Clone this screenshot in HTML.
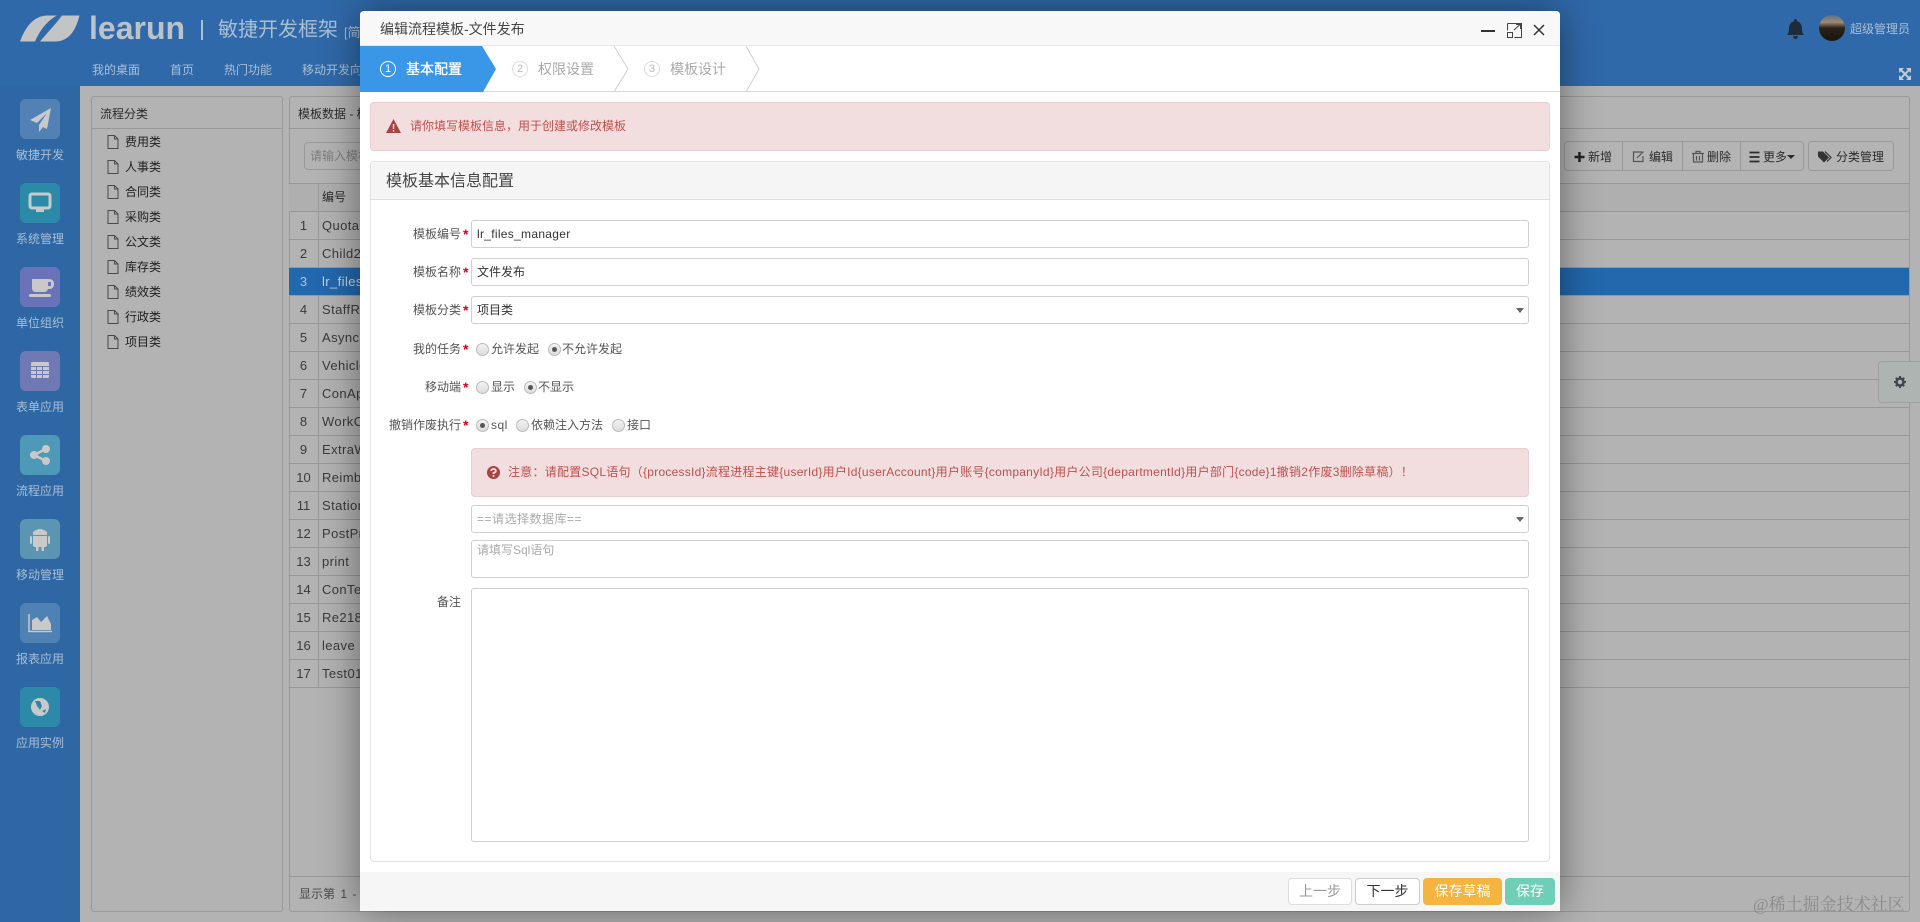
<!DOCTYPE html>
<html lang="zh-CN"><head><meta charset="utf-8"><title>learun</title>
<style>
*{box-sizing:border-box}
html,body{margin:0;padding:0;width:1920px;height:922px;overflow:hidden;background:#b3b3b3;font:12px/16px "Liberation Sans","Noto Sans CJK SC",sans-serif;color:#333}
#w{position:absolute;left:0;top:0;width:1920px;height:922px;overflow:hidden;filter:blur(.35px)}
.a,.t{position:absolute}
.t{white-space:nowrap}
.ic{position:absolute;left:20px;width:40px;height:40px;border-radius:6px}
.ic svg{position:absolute;left:0;top:0}
.sl{position:absolute;left:0;width:80px;text-align:center;color:#a9bfd4;line-height:16px}
.nav{position:absolute;top:62px;color:#a9bfd4;line-height:16px;white-space:nowrap}
.tree{position:absolute;left:125px;color:#1f1f1f;line-height:16px}
.f{position:absolute;left:107px}
.hl{position:absolute;left:289px;width:1620px;height:1px;background:#989898}
.n{position:absolute;left:289px;width:29px;text-align:center;color:#3a3a3a;font-size:13px;line-height:16px}
.c{position:absolute;left:322px;color:#3a3a3a;font-size:13px;line-height:16px;letter-spacing:.4px;white-space:nowrap}
.panel{position:absolute;border:1px solid #999;border-radius:3px;background:#b3b3b3}
.tb{position:absolute;top:141px;height:30px;border:1px solid #999;background:#b4b4b4}
.tt{position:absolute;top:149px;line-height:16px;color:#2b2b2b;white-space:nowrap}
.lab{position:absolute;right:1459px;color:#555;line-height:16px;white-space:nowrap}
.st{position:absolute;left:463px;color:#d8001c;line-height:16px;font-size:14px;font-weight:bold}
.inp{position:absolute;left:471px;width:1058px;height:28px;border:1px solid #d0d0d0;border-radius:3px;background:#fff;line-height:26px;padding-left:5px;color:#333;white-space:nowrap}
.arr{position:absolute;right:4px;top:11px;width:0;height:0;border:4px solid transparent;border-top:5px solid #666;border-bottom:0}
.r{position:absolute;width:13px;height:13px;border-radius:50%;border:1px solid #bbb;background:linear-gradient(#f2f2f2,#dcdcdc)}
.r.on:after{content:"";position:absolute;left:3px;top:3px;width:5px;height:5px;border-radius:50%;background:#555}
.rt{position:absolute;color:#555;line-height:16px;white-space:nowrap}
.btn{position:absolute;top:878px;height:27px;border-radius:4px;text-align:center;line-height:25px;font-size:14px;white-space:nowrap;border:1px solid #ddd;background:#fff}
</style></head><body><div id="w">

<!-- header + sidebar -->
<div class="a" style="left:0;top:0;width:1920px;height:86px;background:#3069a9"></div>
<div class="a" style="left:0;top:86px;width:80px;height:836px;background:#2e67a3"></div>

<svg class="a" style="left:0;top:0" width="90" height="50"><path fill="#c2c4c6" d="M20 41.500 C25 28 33 16 47 15.500 L57 15.500 C48 20 40 30 35 41.500 Z M40 41.500 C47 33 55 25 62 15.500 L79.500 15.500 C76 30 69 41.500 55 41.500 Z"/></svg>
<div class="t" style="left:89px;top:8px;font-size:32px;line-height:40px;font-weight:bold;color:#bcc2c9">learun</div>
<div class="a" style="left:201px;top:20px;width:2px;height:20px;background:#a9bfd4"></div>
<div class="t" style="left:218px;top:16px;font-size:20px;line-height:28px;color:#a9bfd4">敏捷开发框架</div>
<div class="t" style="left:344px;top:24px;font-size:13px;line-height:18px;color:#a9bfd4">[简</div>

<div class="nav" style="left:92px">我的桌面</div>
<div class="nav" style="left:170px">首页</div>
<div class="nav" style="left:224px">热门功能</div>
<div class="nav" style="left:302px">移动开发向</div>

<div class="ic" style="top:99px;background:#5181b5"><svg width="40" height="40"><path fill="#c9c9c9" d="M31 9 L10 21 L17 24 L27 14 L19 26 L19 33 L23 28 L27 30 Z"/></svg></div>
<div class="sl" style="top:147px">敏捷开发</div>
<div class="ic" style="top:183px;background:#2c8aa9"><svg width="40" height="40"><rect x="10" y="11" width="20" height="14" rx="2" fill="none" stroke="#c9c9c9" stroke-width="3"/><rect x="16" y="26" width="8" height="3" fill="#c9c9c9"/></svg></div>
<div class="sl" style="top:231px">系统管理</div>
<div class="ic" style="top:267px;background:#6a72ba"><svg width="40" height="40"><path fill="#c9c9c9" d="M12 12 H29 Q34 12 34 17 Q34 22 29 22 H28 Q27 25 24 25 H16 Q12 25 12 21 Z"/><rect x="9" y="27" width="22" height="3" rx="1.500" fill="#c9c9c9"/><rect x="28" y="15" width="3" height="4" fill="#6a72ba"/></svg></div>
<div class="sl" style="top:315px">单位组织</div>
<div class="ic" style="top:351px;background:#6f7ab4"><svg width="40" height="40"><rect x="11" y="11" width="18" height="16" rx="1.500" fill="#c9c9c9"/><path stroke="#6f7ab4" stroke-width="1" d="M11 15.500H29M11 19.500H29M11 23.500H29M16.500 15V27M22.500 15V27"/></svg></div>
<div class="sl" style="top:399px">表单应用</div>
<div class="ic" style="top:435px;background:#4e98b8"><svg width="40" height="40"><path stroke="#c9c9c9" stroke-width="2.500" d="M14 20L26 14M14 20L26 26"/><circle cx="14" cy="20" r="4" fill="#c9c9c9"/><circle cx="26" cy="14" r="4" fill="#c9c9c9"/><circle cx="26" cy="26" r="4" fill="#c9c9c9"/></svg></div>
<div class="sl" style="top:483px">流程应用</div>
<div class="ic" style="top:519px;background:#5c95b1"><svg width="40" height="40"><path fill="#c9c9c9" d="M13 13 Q20 7 27 13 V16 H13 Z M13 17 H27 V26 Q27 28 25 28 H15 Q13 28 13 26 Z"/><rect x="10" y="17" width="2" height="8" rx="1" fill="#c9c9c9"/><rect x="28" y="17" width="2" height="8" rx="1" fill="#c9c9c9"/><rect x="16" y="28" width="2.500" height="4" fill="#c9c9c9"/><rect x="21.500" y="28" width="2.500" height="4" fill="#c9c9c9"/></svg></div>
<div class="sl" style="top:567px">移动管理</div>
<div class="ic" style="top:603px;background:#5081b3"><svg width="40" height="40"><path fill="none" stroke="#c9c9c9" stroke-width="1.500" d="M9 11V28.500H32"/><path fill="#c9c9c9" d="M12 27V17L17 14L21 19L27 13L31 21V27Z"/></svg></div>
<div class="sl" style="top:651px">报表应用</div>
<div class="ic" style="top:687px;background:#2c8aa8"><svg width="40" height="40"><circle cx="20" cy="20" r="9" fill="#c9c9c9"/><path fill="#2c8aa8" d="M15 14 L20 14 L22 19 L20 23 L17 19 Z M22 24 L26 22 L25 26 Z"/></svg></div>
<div class="sl" style="top:735px">应用实例</div>

<div class="t" style="left:1787px;top:19px;width:17px;height:20px"><svg width="17" height="20"><path fill="#1e2b3d" d="M8.500 0 Q10 0 10 2 Q15 4 15 10 Q15 14 17 16 H0 Q2 14 2 10 Q2 4 7 2 Q7 0 8.500 0 Z M6 17 H11 Q10.500 20 8.500 20 Q6.500 20 6 17 Z"/></svg></div>
<div class="a" style="left:1819px;top:15px;width:26px;height:26px;border-radius:50%;background:linear-gradient(#5a7090 0%,#a08a70 28%,#2a2118 50%,#1b1510 100%)"></div>
<div class="t" style="left:1850px;top:21px;color:#a9bfd4">超级管理员</div>
<svg class="a" style="left:1899px;top:68px" width="12" height="12"><path fill="none" stroke="#c5ccd3" stroke-width="2" d="M1 1L11 11M11 1L1 11"/><path fill="#c5ccd3" d="M0 0H5L0 5ZM12 0V5L7 0ZM0 12V7L5 12ZM12 12H7L12 7Z"/></svg>

<!-- left panel -->
<div class="panel" style="left:91px;top:96px;width:192px;height:816px"></div>
<div class="a" style="left:91px;top:128px;width:192px;height:1px;background:#989898"></div>
<div class="t" style="left:100px;top:106px;color:#2b2b2b">流程分类</div>
<svg width="0" height="0" style="position:absolute"><defs><symbol id="fi" viewBox="0 0 12 14"><path fill="none" stroke="#4a4a4a" d="M1 .5H7.500L11 4V13.500H1ZM7.500 .5V4H11"/></symbol></defs></svg>
<svg class="f" style="top:135px" width="12" height="14"><use href="#fi"/></svg><div class="tree" style="top:134px">费用类</div>
<svg class="f" style="top:160px" width="12" height="14"><use href="#fi"/></svg><div class="tree" style="top:159px">人事类</div>
<svg class="f" style="top:185px" width="12" height="14"><use href="#fi"/></svg><div class="tree" style="top:184px">合同类</div>
<svg class="f" style="top:210px" width="12" height="14"><use href="#fi"/></svg><div class="tree" style="top:209px">采购类</div>
<svg class="f" style="top:235px" width="12" height="14"><use href="#fi"/></svg><div class="tree" style="top:234px">公文类</div>
<svg class="f" style="top:260px" width="12" height="14"><use href="#fi"/></svg><div class="tree" style="top:259px">库存类</div>
<svg class="f" style="top:285px" width="12" height="14"><use href="#fi"/></svg><div class="tree" style="top:284px">绩效类</div>
<svg class="f" style="top:310px" width="12" height="14"><use href="#fi"/></svg><div class="tree" style="top:309px">行政类</div>
<svg class="f" style="top:335px" width="12" height="14"><use href="#fi"/></svg><div class="tree" style="top:334px">项目类</div>

<!-- right panel -->
<div class="panel" style="left:289px;top:96px;width:1621px;height:816px"></div>
<div class="hl" style="top:128px"></div>
<div class="t" style="left:298px;top:106px;color:#2b2b2b">模板数据 - 模</div>
<div class="a" style="left:304px;top:142px;width:80px;height:28px;border:1px solid #999;border-radius:4px"></div>
<div class="t" style="left:310px;top:148px;color:#7d7d7d">请输入模板</div>

<div class="a" style="left:289px;top:183px;width:1620px;height:28px;background:#afafaf"></div>
<div class="a" style="left:318px;top:183px;width:1px;height:504px;background:#989898"></div>
<div class="hl" style="top:183px"></div>
<div class="hl" style="top:211px"></div><div class="hl" style="top:239px"></div><div class="hl" style="top:267px"></div><div class="hl" style="top:295px"></div><div class="hl" style="top:323px"></div><div class="hl" style="top:351px"></div><div class="hl" style="top:379px"></div><div class="hl" style="top:407px"></div><div class="hl" style="top:435px"></div><div class="hl" style="top:463px"></div><div class="hl" style="top:491px"></div><div class="hl" style="top:519px"></div><div class="hl" style="top:547px"></div><div class="hl" style="top:575px"></div><div class="hl" style="top:603px"></div><div class="hl" style="top:631px"></div><div class="hl" style="top:659px"></div><div class="hl" style="top:687px"></div>
<div class="hl" style="top:876px"></div>
<div class="a" style="left:289px;top:268px;width:1620px;height:27px;background:#2268ac"></div>

<div class="t" style="left:322px;top:189px;color:#2b2b2b">编号</div>
<div class="n" style="top:218px">1</div><div class="c" style="top:218px">Quota</div>
<div class="n" style="top:246px">2</div><div class="c" style="top:246px">Child2</div>
<div class="n" style="top:274px;color:#b3c4d6">3</div><div class="c" style="top:274px;color:#c7d3df">lr_files</div>
<div class="n" style="top:302px">4</div><div class="c" style="top:302px">StaffRe</div>
<div class="n" style="top:330px">5</div><div class="c" style="top:330px">Async2</div>
<div class="n" style="top:358px">6</div><div class="c" style="top:358px">Vehicle</div>
<div class="n" style="top:386px">7</div><div class="c" style="top:386px">ConAp</div>
<div class="n" style="top:414px">8</div><div class="c" style="top:414px">WorkC</div>
<div class="n" style="top:442px">9</div><div class="c" style="top:442px">ExtraW</div>
<div class="n" style="top:470px">10</div><div class="c" style="top:470px">Reimb</div>
<div class="n" style="top:498px">11</div><div class="c" style="top:498px">Station</div>
<div class="n" style="top:526px">12</div><div class="c" style="top:526px">PostPr</div>
<div class="n" style="top:554px">13</div><div class="c" style="top:554px">print</div>
<div class="n" style="top:582px">14</div><div class="c" style="top:582px">ConTe</div>
<div class="n" style="top:610px">15</div><div class="c" style="top:610px">Re2188</div>
<div class="n" style="top:638px">16</div><div class="c" style="top:638px">leave</div>
<div class="n" style="top:666px">17</div><div class="c" style="top:666px">Test01</div>
<div class="t" style="left:299px;top:886px;color:#4a4a4a;word-spacing:2px;font-size:12px">显示第 1 - 17</div>

<!-- toolbar -->
<div class="tb" style="left:1564px;width:59px;border-radius:4px 0 0 4px"></div>
<div class="tb" style="left:1622px;width:61px"></div>
<div class="tb" style="left:1682px;width:59px"></div>
<div class="tb" style="left:1740px;width:64px;border-radius:0 4px 4px 0"></div>
<div class="tb" style="left:1808px;width:86px;border-radius:4px"></div>
<svg class="a" style="left:1560px;top:141px" width="340" height="30">
<path stroke="#222" stroke-width="2.500" d="M14.500 16H24.500M19.500 11V21"/>
<path fill="none" stroke="#555" stroke-width="1.200" d="M82 11H73.500V20.500H83V15M77 17L83.500 10.500"/>
<path fill="none" stroke="#555" stroke-width="1.200" d="M133.500 13V21H142.500V13M132 12.500H144M136 12.500V10.500H140V12.500M136.500 15V19.500M139.500 15V19.500"/>
<path stroke="#2b2b2b" stroke-width="1.800" d="M189.500 11.500H199.500M189.500 16H199.500M189.500 20.500H199.500"/>
<path fill="#2b2b2b" d="M227 14H235L231 18Z"/>
<path fill="#333" d="M258 10.500H263L269 16.500L264 21.500L258 15.500Z"/><path fill="none" stroke="#333" stroke-width="1.200" d="M265 10.500L271 16.500L267 20.500"/>
</svg>
<div class="tt" style="left:1588px">新增</div>
<div class="tt" style="left:1649px">编辑</div>
<div class="tt" style="left:1707px">删除</div>
<div class="tt" style="left:1763px">更多</div>
<div class="tt" style="left:1836px">分类管理</div>

<!-- gear -->
<div class="a" style="left:1878px;top:361px;width:42px;height:42px;background:#aeb4b2;border:1px solid #a0a0a0;border-right:0;border-radius:4px 0 0 4px"></div>
<svg class="a" style="left:1894px;top:376px" width="12" height="12"><circle cx="6" cy="6" r="3.500" fill="none" stroke="#3f474f" stroke-width="2.500"/><path stroke="#3f474f" stroke-width="2" d="M6 0V12M0 6H12M1.800 1.800L10.200 10.200M10.200 1.800L1.800 10.200" stroke-dasharray="2 8"/></svg>

<!-- modal -->
<div class="a" style="left:360px;top:11px;width:1200px;height:900px;background:#fff;border-radius:4px 4px 0 0;box-shadow:0 0 40px rgba(0,0,0,.45)"></div>
<div class="a" style="left:360px;top:11px;width:1200px;height:35px;background:#f8f8f8;border-bottom:1px solid #e8e8e8;border-radius:4px 4px 0 0"></div>
<div class="t" style="left:380px;top:20px;font-size:14px;line-height:18px;color:#444">编辑流程模板-文件发布</div>
<svg class="a" style="left:1478px;top:21px" width="72" height="18"><path stroke="#333" stroke-width="2" d="M3 10H17"/><path fill="none" stroke="#444" d="M29.500 2.500H43.500V16.500H36.500M29.500 9.500V2.500M29.500 11.500H34.500V16.500H29.500ZM36 9L42 3.500M38 3.500H42.500V8"/><path stroke="#333" stroke-width="1.500" d="M56 4L66 14M66 4L56 14"/></svg>

<svg class="a" style="left:360px;top:46px" width="1200" height="46">
<path d="M0 45.500H1200" stroke="#d8d8d8"/>
<path fill="#3a97e8" d="M0 0H122L136 23L123 46H0Z"/>
<path fill="none" stroke="#cfcfcf" d="M254 0L268 23L254 46M386 0L399 23L386 46"/>
<circle cx="28" cy="23" r="7.500" fill="none" stroke="#fff"/>
<circle cx="160" cy="23" r="7.500" fill="none" stroke="#ddd"/>
<circle cx="292" cy="23" r="7.500" fill="none" stroke="#ddd"/>
</svg>
<div class="t" style="left:384px;top:61px;width:8px;text-align:center;font-size:11px;color:#fff">1</div>
<div class="t" style="left:516px;top:61px;width:8px;text-align:center;font-size:11px;color:#bbb">2</div>
<div class="t" style="left:648px;top:61px;width:8px;text-align:center;font-size:11px;color:#bbb">3</div>
<div class="t" style="left:406px;top:60px;font-size:14px;line-height:18px;color:#fff;-webkit-text-stroke:.3px #fff">基本配置</div>
<div class="t" style="left:538px;top:60px;font-size:14px;line-height:18px;color:#aaa">权限设置</div>
<div class="t" style="left:670px;top:60px;font-size:14px;line-height:18px;color:#aaa">模板设计</div>

<div class="a" style="left:370px;top:102px;width:1180px;height:49px;background:#f2dede;border:1px solid #ebccd1;border-radius:4px"></div>
<svg class="a" style="left:386px;top:119px" width="15" height="14"><path fill="#a94442" d="M7.500 0L15 14H0Z"/><rect x="6.800" y="5" width="1.500" height="5" fill="#f2dede"/><rect x="6.800" y="11" width="1.500" height="1.500" fill="#f2dede"/></svg>
<div class="t" style="left:410px;top:118px;color:#c0504d">请你填写模板信息，用于创建或修改模板</div>

<div class="a" style="left:370px;top:161px;width:1180px;height:701px;border:1px solid #e3e3e3;border-radius:4px"></div>
<div class="a" style="left:371px;top:162px;width:1178px;height:38px;background:#f5f5f5;border-bottom:1px solid #ddd;border-radius:4px 4px 0 0"></div>
<div class="t" style="left:386px;top:171px;font-size:16px;line-height:22px;color:#444">模板基本信息配置</div>

<div class="lab" style="top:226px">模板编号</div><div class="st" style="top:226px">*</div>
<div class="inp" style="top:220px;letter-spacing:.3px">lr_files_manager</div>
<div class="lab" style="top:264px">模板名称</div><div class="st" style="top:264px">*</div>
<div class="inp" style="top:258px">文件发布</div>
<div class="lab" style="top:302px">模板分类</div><div class="st" style="top:302px">*</div>
<div class="inp" style="top:296px">项目类<i class="arr"></i></div>

<div class="lab" style="top:341px">我的任务</div><div class="st" style="top:341px">*</div>
<div class="r" style="left:476px;top:343px"></div><div class="rt" style="left:491px;top:341px">允许发起</div>
<div class="r on" style="left:548px;top:343px"></div><div class="rt" style="left:562px;top:341px">不允许发起</div>

<div class="lab" style="top:379px">移动端</div><div class="st" style="top:379px">*</div>
<div class="r" style="left:476px;top:381px"></div><div class="rt" style="left:491px;top:379px">显示</div>
<div class="r on" style="left:524px;top:381px"></div><div class="rt" style="left:538px;top:379px">不显示</div>

<div class="lab" style="top:417px">撤销作废执行</div><div class="st" style="top:417px">*</div>
<div class="r on" style="left:476px;top:419px"></div><div class="rt" style="left:491px;top:417px;letter-spacing:.5px">sql</div>
<div class="r" style="left:516px;top:419px"></div><div class="rt" style="left:531px;top:417px">依赖注入方法</div>
<div class="r" style="left:612px;top:419px"></div><div class="rt" style="left:627px;top:417px">接口</div>

<div class="a" style="left:471px;top:448px;width:1058px;height:49px;background:#f2dede;border:1px solid #ebccd1;border-radius:4px"></div>
<svg class="a" style="left:487px;top:466px" width="13" height="13"><circle cx="6.500" cy="6.500" r="6.500" fill="#a94442"/><path fill="none" stroke="#f2dede" stroke-width="1.800" d="M4.200 5Q4.200 3 6.500 3Q8.800 3 8.800 5Q8.800 6.300 6.500 7V8"/><rect x="5.600" y="9" width="1.800" height="1.800" fill="#f2dede"/></svg>
<div class="t" style="left:508px;top:464px;color:#c0504d;letter-spacing:.25px">注意：请配置SQL语句（{processId}流程进程主键{userId}用户Id{userAccount}用户账号{companyId}用户公司{departmentId}用户部门{code}1撤销2作废3删除草稿）！</div>

<div class="inp" style="top:505px;color:#aaa;letter-spacing:.5px">==请选择数据库==<i class="arr"></i></div>
<div class="inp" style="top:540px;height:38px;color:#aaa;line-height:16px;padding-top:1px">请填写Sql语句</div>
<div class="lab" style="top:594px">备注</div>
<div class="inp" style="top:588px;height:254px"></div>

<div class="a" style="left:360px;top:872px;width:1200px;height:39px;background:#f6f6f6"></div>
<div class="btn" style="left:1288px;width:64px;color:#999">上一步</div>
<div class="btn" style="left:1355px;width:65px;color:#333;border-color:#ccc">下一步</div>
<div class="btn" style="left:1423px;width:79px;background:#f4b43f;border-color:#f4b43f;color:#fff">保存草稿</div>
<div class="btn" style="left:1505px;width:50px;background:#6ecfb6;border-color:#6ecfb6;color:#fff">保存</div>

<div class="t" style="left:1753px;top:894px;font-size:17px;line-height:22px;font-family:'Liberation Serif','Noto Serif CJK SC',serif;color:#8a8a8a">@稀土掘金技术社区</div>
</div></body></html>
